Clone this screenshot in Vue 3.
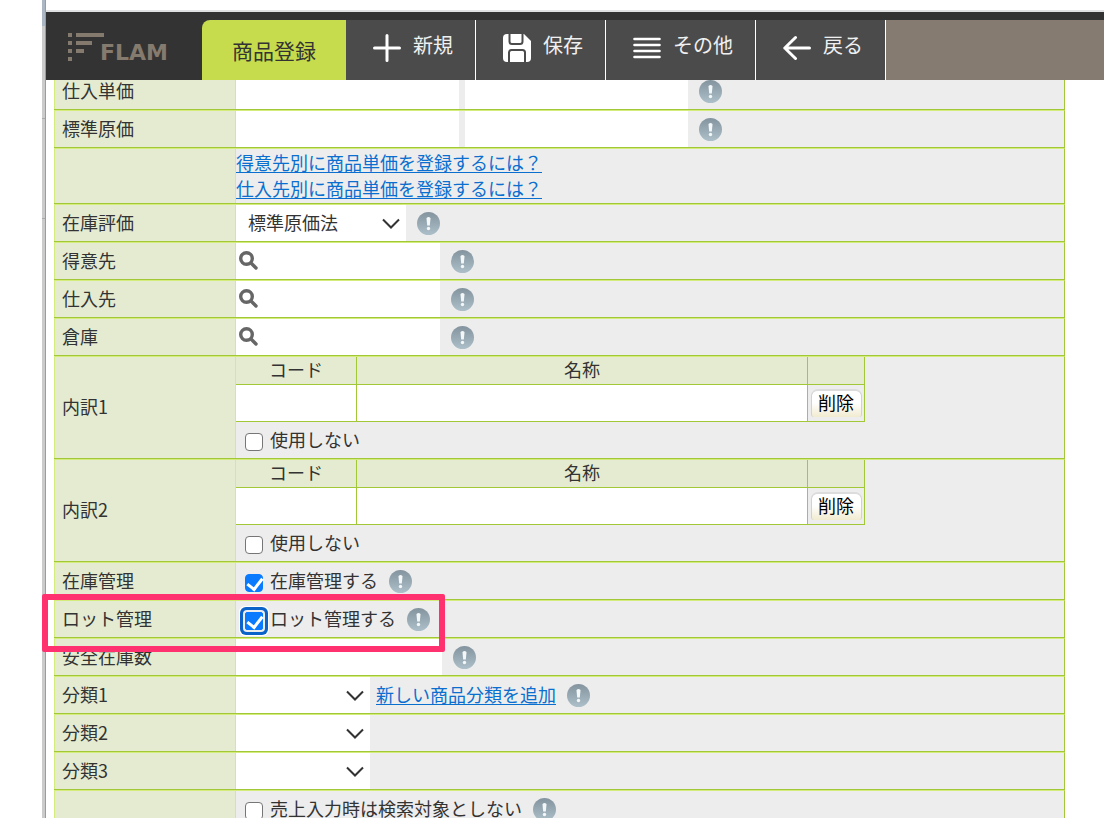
<template>
  <div class="screen">
    <div class="edge">
      <div class="edge__top"></div>
      <div class="edge__mark"></div>
      <div class="edge__mark edge__mark--second"></div>
    </div>

    <div class="page">
      <header class="header">
        <div class="brand">
          <svg class="brand__mark" width="36" height="28" viewBox="0 0 36 28" aria-hidden="true">
            <path d="M0 0h4v4H0zM0 8h4v4H0zM0 16h4v4H0zM0 24h4v4H0zM8 0h28v4H8zM8 8h16v4H8zM8 16h8v4H8z" />
          </svg>
          <span class="brand__name">FLAM</span>
        </div>
        <div class="toolbar">
          <h1 class="toolbar__title">商品登録</h1>
          <button v-for="action in actions" :key="action.key" type="button" class="toolbar__btn">
            <svg class="toolbar__icon" width="28" height="28" viewBox="0 0 28 28" aria-hidden="true">
              <path v-if="action.key === 'new'" class="line" d="M14 1.500v25M1.500 14h25" />
              <g v-else-if="action.key === 'save'">
                <path class="solid" d="M4 0H21L28 7V24a4 4 0 0 1-4 4H4a4 4 0 0 1-4-4V4a4 4 0 0 1 4-4z" />
                <path class="cut" d="M6.500 0V7.500a2.500 2.500 0 0 0 2.500 2.500h8a2.500 2.500 0 0 0 2.500-2.500V0" />
                <path class="cut" d="M6 28V18.500a2.500 2.500 0 0 1 2.500-2.500h11a2.500 2.500 0 0 1 2.500 2.500V28" />
              </g>
              <path v-else-if="action.key === 'more'" class="line line--thin" d="M1.500 5h25M1.500 11h25M1.500 17h25M1.500 23h25" />
              <path v-else class="line" d="M12.500 3.500L1.800 14l10.700 10.500M1.800 14h24.700" />
            </svg>
            <span>{{ action.label }}</span>
          </button>
          <div class="toolbar__rest"></div>
        </div>
      </header>

      <form class="form" @submit.prevent>
        <div v-for="row in rows" :key="row.id" class="row">
          <div class="row__label">
            <label v-if="row.label" :for="row.id">{{ row.label }}</label>
          </div>

          <div v-if="row.type === 'links'" class="row__body row__body--links">
            <a v-for="link in row.links" :key="link" href="#">{{ link }}</a>
          </div>

          <div v-else-if="row.type === 'breakdown'" class="row__body row__body--stack">
            <table class="breakdown">
              <thead>
                <tr>
                  <th class="breakdown__code">コード</th>
                  <th class="breakdown__name">名称</th>
                  <th class="breakdown__action"></th>
                </tr>
              </thead>
              <tbody>
                <tr>
                  <td><input :id="row.id" type="text" aria-label="コード" /></td>
                  <td><input type="text" aria-label="名称" /></td>
                  <td class="breakdown__cell"><button type="button" class="delete-btn">削除</button></td>
                </tr>
              </tbody>
            </table>
            <label class="check">
              <input v-model="row.unused" type="checkbox" />
              <span>使用しない</span>
            </label>
          </div>

          <div v-else class="row__body">
            <template v-if="row.type === 'pair'">
              <input :id="row.id" class="field field--price" type="text" />
              <input class="field field--price" type="text" :aria-label="row.label" />
            </template>

            <div v-else-if="row.type === 'select'" class="select" :class="{ 'select--wide': row.options }">
              <select :id="row.id">
                <option v-for="option in row.options || ['']" :key="option">{{ option }}</option>
              </select>
              <svg class="select__arrow" width="18" height="12" viewBox="0 0 18 12" aria-hidden="true">
                <path d="M1 1.500l8 8 8-8" />
              </svg>
            </div>

            <div v-else-if="row.type === 'search'" class="search">
              <svg class="search__icon" width="20" height="20" viewBox="0 0 20 20" aria-hidden="true">
                <circle cx="7.500" cy="7.500" r="5.800" />
                <path d="M12 12l5 5" />
              </svg>
              <input :id="row.id" type="text" />
            </div>

            <input v-else-if="row.type === 'text'" :id="row.id" class="field field--stock" type="text" />

            <label v-else-if="row.type === 'check'" class="check">
              <input :id="row.id" v-model="row.checked" type="checkbox" :class="{ focused: row.focused }" />
              <span>{{ row.text }}</span>
            </label>

            <a v-if="row.link" class="row__link" href="#">{{ row.link }}</a>

            <svg v-if="row.help" class="help" width="23" height="23" viewBox="0 0 23 23" aria-hidden="true">
              <defs>
                <linearGradient :id="`${row.id}-help`" x1="0" y1="0" x2="0" y2="1">
                  <stop offset="0" stop-color="#83949f" />
                  <stop offset="1" stop-color="#adbfc9" />
                </linearGradient>
              </defs>
              <circle cx="11.500" cy="11.500" r="11.500" :fill="`url(#${row.id}-help)`" />
              <path d="M9.500 6.500a2 1.500 0 0 1 4 0L12.800 13.500h-2.600z" fill="#f4f7f8" />
              <circle cx="11.500" cy="16.500" r="1.700" fill="#f4f7f8" />
            </svg>
          </div>

          <div v-if="row.marked" class="marker"></div>
        </div>
      </form>
    </div>
  </div>
</template>

<script setup>
import { ref } from 'vue'

const actions = [
  { key: 'new', label: '新規' },
  { key: 'save', label: '保存' },
  { key: 'more', label: 'その他' },
  { key: 'back', label: '戻る' }
]

const rows = ref([
  { id: 'purchase-price', label: '仕入単価', type: 'pair', help: true },
  { id: 'standard-cost', label: '標準原価', type: 'pair', help: true },
  {
    id: 'price-links',
    type: 'links',
    links: ['得意先別に商品単価を登録するには？', '仕入先別に商品単価を登録するには？']
  },
  { id: 'valuation', label: '在庫評価', type: 'select', options: ['標準原価法'], help: true },
  { id: 'customer', label: '得意先', type: 'search', help: true },
  { id: 'supplier', label: '仕入先', type: 'search', help: true },
  { id: 'warehouse', label: '倉庫', type: 'search', help: true },
  { id: 'breakdown1', label: '内訳1', type: 'breakdown', unused: false },
  { id: 'breakdown2', label: '内訳2', type: 'breakdown', unused: false },
  { id: 'stock', label: '在庫管理', type: 'check', text: '在庫管理する', checked: true, help: true },
  { id: 'lot', label: 'ロット管理', type: 'check', text: 'ロット管理する', checked: true, focused: true, marked: true, help: true },
  { id: 'safety-stock', label: '安全在庫数', type: 'text', help: true },
  { id: 'category1', label: '分類1', type: 'select', link: '新しい商品分類を追加', help: true },
  { id: 'category2', label: '分類2', type: 'select' },
  { id: 'category3', label: '分類3', type: 'select' },
  { id: 'exclude', type: 'check', text: '売上入力時は検索対象としない', checked: false, help: true }
])
</script>

<style>
body {
  margin: 0;
  background: #fff;
}
</style>

<style scoped>
.screen {
  display: flex;
  height: 100vh;
  padding-left: 42px;
  box-sizing: border-box;
  overflow: hidden;
  color: #333;
  font-family: "Noto Sans CJK JP", "Liberation Sans", sans-serif;
  font-size: 18px;
  line-height: 27px;
}

.screen * {
  box-sizing: border-box;
}

input,
select,
button {
  margin: 0;
  padding: 0;
  border: 0;
  border-radius: 0;
  color: inherit;
  font: inherit;
}

a {
  color: #0b6fd0;
  text-underline-offset: 2px;
}

/* window edge */
.edge {
  flex: none;
  width: 4px;
  background: #cbcbcb;
  border-right: 1px solid #9c9c9c;
}

.edge__top {
  height: 26px;
  background: #abb8c3;
}

.edge__mark {
  height: 1px;
  margin-top: 92px;
  background: #aaa;
}

.edge__mark--second {
  margin-top: 99px;
}

.page {
  flex: 1;
  min-width: 0;
}

/* header */
.header {
  position: relative;
  z-index: 1;
  display: flex;
  margin-top: 10px;
  border-top: 2px solid #dfe1e3;
  background: #333;
}

.brand {
  display: flex;
  width: 156px;
  padding: 21px 0 0 22px;
}

.brand__mark {
  flex: none;
  fill: #857a6e;
}

.brand__name {
  margin: 8px 0 0 -4px;
  color: #857a6e;
  font-family: "DejaVu Sans", sans-serif;
  font-size: 22px;
  font-weight: bold;
  line-height: 24px;
}

.toolbar {
  display: flex;
  flex: 1;
  height: 60px;
  margin-top: 8px;
}

.toolbar__title {
  margin: 0;
  padding: 0 30px;
  border-radius: 8px 0 0 0;
  background: #c6dc4d;
  font-size: 21px;
  font-weight: normal;
  line-height: 60px;
}

.toolbar__btn {
  display: flex;
  padding: 0 22px 0 27px;
  gap: 12px;
  border-right: 1px solid #fff;
  background: #4b4b4b;
  color: #f0f0f0;
  font-size: 20px;
  line-height: 50px;
  white-space: nowrap;
}

.toolbar__icon {
  margin-top: 14px;
}

.line {
  fill: none;
  stroke: #fff;
  stroke-width: 3;
  stroke-linecap: round;
  stroke-linejoin: round;
}

.line--thin {
  stroke-width: 2.600;
}

.solid {
  fill: #fff;
}

.cut {
  fill: none;
  stroke: #4b4b4b;
  stroke-width: 2;
}

.toolbar__rest {
  flex: 1;
  background: #857b70;
}

/* form, scrolled a little under the header */
.form {
  margin: -9px 39px 0 8px;
}

.row {
  position: relative;
  display: flex;
  border-top: 1px solid #a3c837;
}

.row__label {
  display: flex;
  flex: none;
  align-items: center;
  width: 182px;
  padding: 0 0 2px 7px;
  border: 1px solid #d3ec7c;
  border-bottom: 0;
  background: #e4ebd0;
}

.row__body {
  display: flex;
  flex: 1;
  align-items: center;
  height: 37px;
  border-top: 1px solid #d3ec7c;
  border-right: 1px solid #a3c837;
  background: #ededed;
}

.row__body--links,
.row__body--stack {
  flex-direction: column;
  align-items: flex-start;
  height: auto;
}

.row__body--links {
  line-height: 26px;
  padding-bottom: 2px;
}

.row__link {
  margin-left: 6px;
  padding-bottom: 2px;
}

.field {
  height: 36px;
  background: #fff;
}

.field--price {
  width: 223px;
}

.field--price + .field--price {
  margin-left: 6px;
}

.field--stock {
  width: 206px;
}

.help {
  flex: none;
  margin-left: 11px;
}

.select {
  position: relative;
  width: 134px;
  height: 36px;
}

.select--wide {
  width: 170px;
}

.select select {
  width: 100%;
  height: 36px;
  padding: 0 30px 2px 12px;
  background: #fff;
  appearance: none;
}

.select__arrow {
  position: absolute;
  top: 13px;
  right: 6px;
  fill: none;
  stroke: #333;
  stroke-width: 2;
  pointer-events: none;
}

.search {
  display: flex;
  width: 204px;
  height: 36px;
  padding: 8px 0 0 3px;
  background: #fff;
}

.search__icon {
  flex: none;
  fill: none;
  stroke: #666;
  stroke-width: 3.400;
  stroke-linecap: round;
}

.search input {
  flex: 1;
  min-width: 0;
  background: transparent;
}

.check {
  display: flex;
  align-items: center;
  height: 36px;
  padding-left: 9px;
  gap: 7px;
}

.check span {
  padding-bottom: 2px;
}

.check input {
  position: relative;
  width: 18px;
  height: 18px;
  margin-top: 3px;
  border: 1px solid #767676;
  border-radius: 4px;
  background: #fff;
  appearance: none;
}

.check input:checked {
  border-color: #0a7aff;
  background: #0a7aff;
}

.check input:checked::after {
  content: "";
  position: absolute;
  top: 0;
  left: 4px;
  width: 7px;
  height: 12px;
  border: solid #fff;
  border-width: 0 3px 3px 0;
  transform: rotate(38deg);
}

.check .focused {
  border-radius: 2px;
  box-shadow: 0 0 0 2px #ededed, 0 0 0 5px #0b62c9, 0 0 0 6px #fff;
}

/* breakdown table */
.breakdown {
  border-spacing: 0;
  table-layout: fixed;
  width: 629px;
}

.breakdown th,
.breakdown td {
  padding: 0;
  border-right: 1px solid #a3c837;
  border-bottom: 1px solid #a3c837;
}

.breakdown th {
  height: 28px;
  background: #e4ebd0;
  font-weight: normal;
  line-height: 25px;
  vertical-align: top;
}

.breakdown td {
  height: 37px;
}

.breakdown__code {
  width: 121px;
}

.breakdown__action {
  width: 57px;
}

.breakdown input {
  display: block;
  width: 100%;
  height: 36px;
  background: #fff;
}

.breakdown__cell {
  text-align: center;
}

.delete-btn {
  display: block;
  width: 51px;
  height: 28px;
  margin: 0 auto;
  padding-bottom: 4px;
  border: 1px solid #d2d2d2;
  border-top: 2px solid #dcdcdc;
  border-bottom: 0;
  border-radius: 7px 7px 3px 3px;
  background: linear-gradient(#fff 45%, #f1ebcf);
  color: #000;
  line-height: 22px;
}

/* highlight frame round a row */
.marker {
  position: absolute;
  top: -6px;
  left: -12px;
  width: 403px;
  height: 58px;
  border: 6px solid #ff316e;
  border-radius: 2px;
  pointer-events: none;
  z-index: 1;
}
</style>
